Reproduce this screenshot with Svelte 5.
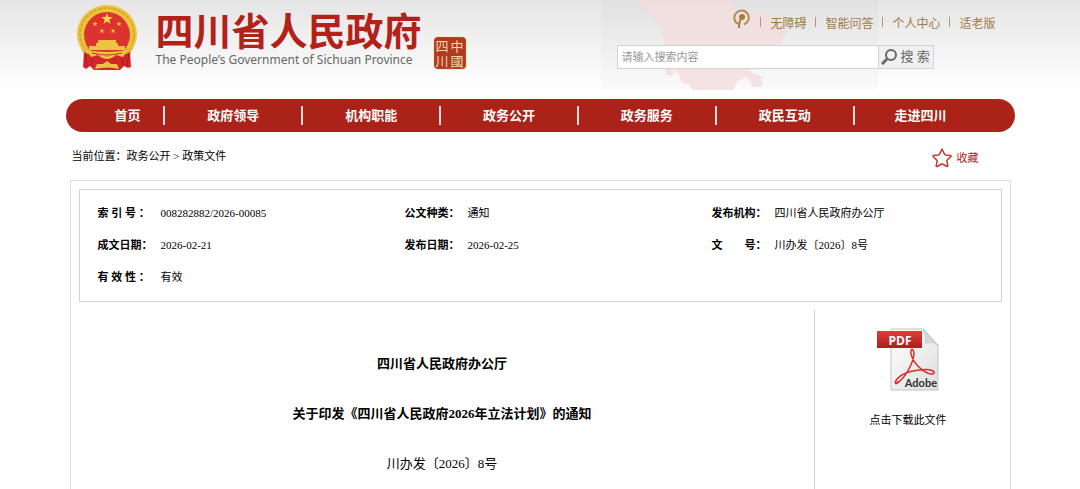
<script>
  let keyword = $state('');
  let saved = $state(false);

  const topLinks = ['无障碍', '智能问答', '个人中心', '适老版'];
  const navItems = ['首页', '政府领导', '机构职能', '政务公开', '政务服务', '政民互动', '走进四川'];

  const rows = [
    [
      { label: '索 引 号 ：', value: '008282882/2026-00085' },
      { label: '公文种类：', value: '通知' },
      { label: '发布机构：', value: '四川省人民政府办公厅' },
    ],
    [
      { label: '成文日期：', value: '2026-02-21' },
      { label: '发布日期：', value: '2026-02-25' },
      { label: '文　　号：', value: '川办发〔2026〕8号' },
    ],
    [{ label: '有 效 性 ：', value: '有效' }],
  ];

  const star = 'M0 -6L1.400 -1.900H5.700L2.300 .7L3.500 4.900L0 2.300L-3.500 4.900L-2.300 .7L-5.700 -1.900H-1.400Z';
  const smallStars = [[19, 20], [43, 20], [26, 27], [37, 27]];
</script>

<header>
  <div class="wrap header-inner">
    <svg class="map" viewBox="0 0 277 90" width="277" height="90" aria-hidden="true">
      <rect width="277" height="90" fill="#000" opacity="0.015" />
      <path
        fill="#f4dddd"
        opacity="0.8"
        d="M36 0L40 8L48 12L53 21L60 27L61 36L64 44L63 60L65 75L71 76L73 70L78 74L80 82L88 85L92 90H132L136 82L144 77L149 80L151 87L160 87L163 82L158 80L164 77L154 74L147 70L160 69L158 60L164 54L166 46L180 43L184 34L188 30L180 24L174 19L175 13L160 14L145 11L134 10L131 0Z"
      />
    </svg>

    <a class="brand" href="#home">
      <svg class="emblem" viewBox="0 0 62 68" width="62" height="68" aria-hidden="true">
        <ellipse cx="31" cy="30" rx="30" ry="29" fill="#edc440" />
        <ellipse cx="31" cy="30" rx="27" ry="26" fill="none" stroke="#dca92f" stroke-width="2" stroke-dasharray="4 1" />
        <path d="M5 44L12 58H50L57 44Z" fill="#e6b737" />
        <path d="M8 48L12 50L50 50L54 48L55 63L52 64L48 62L44 66H18L14 62L10 65L7 63Z" fill="#d2262c" />
        <ellipse cx="31" cy="31" rx="23" ry="23" fill="#dd332f" />
        <path transform="translate(31 15)" d={star} fill="#f8d64a" />
        {#each smallStars as [x, y]}
          <path transform="translate({x} {y}) scale(0.45)" d={star} fill="#f5cd45" />
        {/each}
        <path d="M22 36H40V39H42V42H49V46H13V42H20V39H22Z" fill="#edc440" />
        <path d="M10 46Q31 50 52 46L47 53L40 51Q31 59 22 51L15 53Z" fill="#edc440" />
        <path d="M16 49Q31 53 46 49" fill="none" stroke="#d2262c" stroke-width="1" />
        <path d="M25 50Q31 54 37 50" fill="none" stroke="#c4912a" stroke-width="1" />
        <path d="M19 65L21 60H27L31 57L35 60H41L43 65Q31 62 19 65Z" fill="#edc440" />
        <path d="M9 50L11 62M16 55L15 61M53 50L51 62M46 55L47 61" stroke="#a91820" stroke-width="1" />
      </svg>
      <span class="names">
        <span class="name">四川省人民政府</span>
        <span class="name-en">The People’s Government of Sichuan Province</span>
      </span>
      <span class="seal"><span>四</span><span>中</span><span>川</span><span>國</span></span>
    </a>

    <div class="tools">
      <div class="top-links">
        <a class="care" href="#care" aria-label="关怀">
          <svg viewBox="0 0 18 20" width="18" height="20">
            <path d="M5 15A7.200 7.200 0 1 1 11 15.500" fill="none" stroke="#b18a55" stroke-width="2" />
            <circle cx="9" cy="8" r="3" fill="#a9793c" />
            <path d="M9 8Q6 12 6 19" fill="none" stroke="#a9793c" stroke-width="2" />
          </svg>
        </a>
        {#each topLinks as link}
          <i></i>
          <a href="#top">{link}</a>
        {/each}
      </div>
      <form class="search" onsubmit={(e) => e.preventDefault()}>
        <input type="text" aria-label="搜索" placeholder="请输入搜索内容" bind:value={keyword} />
        <button type="submit">
          <svg viewBox="0 0 16 16" width="16" height="16" aria-hidden="true">
            <circle cx="10" cy="6" r="5" fill="none" stroke="#666" stroke-width="2" />
            <path d="M6 10L1 15" stroke="#666" stroke-width="3" />
          </svg>
          搜 索
        </button>
      </form>
    </div>
  </div>
</header>

<nav class="wrap">
  {#each navItems as item}
    <a href="#nav">{item}</a>
  {/each}
</nav>

<div class="content">
  <div class="crumbs">
    <div>当前位置：<a href="#open">政务公开</a> &gt; <a href="#policy">政策文件</a></div>
    <button class="fav" aria-pressed={saved} onclick={() => (saved = !saved)}>
      <svg viewBox="0 0 20 20" width="20" height="20" aria-hidden="true">
        <path
          d="M10 1L12.600 6.300Q13 6.800 13.600 6.900L18.500 7.500Q19.500 8 18.700 8.800L15 12.200Q14.700 12.600 14.900 13.200L15.900 17.800Q15.800 18.800 14.900 18.500L10.500 16Q10 15.800 9.500 16L5.100 18.500Q4.200 18.800 4.100 17.800L5.100 13.200Q5.300 12.600 5 12.200L1.300 8.800Q.5 8 1.500 7.500L6.400 6.900Q7 6.800 7.400 6.300Z"
          fill={saved ? '#c0392f' : 'none'}
          stroke="#c0392f"
          stroke-width="1.500"
          stroke-linejoin="round"
        />
      </svg>
      收藏
    </button>
  </div>

  <main>
    <div class="info">
      <table>
        <tbody>
          {#each rows as row}
            <tr>
              {#each row as cell}
                <th scope="row">{cell.label}</th>
                <td>{cell.value}</td>
              {/each}
            </tr>
          {/each}
        </tbody>
      </table>
    </div>

    <div class="doc">
      <article>
        <h1>四川省人民政府办公厅</h1>
        <h2>关于印发《四川省人民政府2026年立法计划》的通知</h2>
        <p>川办发〔2026〕8号</p>
      </article>
      <aside>
        <a href="#download">
          <svg viewBox="0 0 64 64" width="64" height="64" aria-hidden="true">
            <defs>
              <linearGradient id="page" x1="0" y1="0" x2="1" y2="1">
                <stop offset="0" stop-color="#fff" />
                <stop offset="1" stop-color="#dedede" />
              </linearGradient>
              <linearGradient id="band" x1="0" y1="0" x2="0" y2="1">
                <stop offset="0" stop-color="#e23c37" />
                <stop offset="1" stop-color="#a8201e" />
              </linearGradient>
            </defs>
            <path d="M15 1H47L62 17V62H15Z" fill="url(#page)" stroke="#c4c4c4" />
            <path d="M47 1Q51 8 49 15Q56 13 62 17Z" fill="#d6d6d6" stroke="#b5b5b5" stroke-width="0.500" />
            <path d="M20 55C28 53 38 34 38 25C37 18 33 22 36 29C39 37 50 47 57 46C61 44 55 40 43 42C34 43 26 45 21 51C18 55 19 58 24 53" fill="none" stroke="#dc2d28" stroke-width="1.500" />
            <rect x="1" y="3" width="45" height="17" fill="url(#band)" />
            <text x="24" y="17" text-anchor="middle" class="pdf">PDF</text>
            <text x="61" y="59" text-anchor="end" class="adobe">Adobe</text>
          </svg>
          <span>点击下载此文件</span>
        </a>
      </aside>
    </div>
  </main>
</div>

<style>
  :global(body) {
    background: #fff;
    color: #000;
    font-family: "Liberation Serif", "Noto Sans CJK SC", serif;
    font-size: 11px;
    line-height: 16px;
  }

  a {
    color: inherit;
    text-decoration: none;
  }

  svg { display: block; }

  button {
    font: inherit;
    cursor: pointer;
  }

  .wrap {
    max-width: 949px;
    margin: 0 auto;
  }

  header { background: linear-gradient(#e5e5e5, #fff 90px); }

  .header-inner {
    position: relative;
    display: flex;
    justify-content: space-between;
    height: 99px;
  }

  .map {
    position: absolute;
    top: 0;
    right: 137px;
  }

  .brand {
    display: flex;
    align-items: flex-start;
    padding: 4px 0 0 10px;
  }

  .names {
    display: flex;
    flex-direction: column;
    margin: 4px 0 0 18px;
  }

  .name {
    color: #b32219;
    font-family: "Noto Sans CJK SC", sans-serif;
    font-size: 38px;
    font-weight: bold;
    line-height: 42px;
  }

  .name-en {
    color: #666;
    font-family: "Noto Sans", sans-serif;
    font-size: 12px;
    line-height: 20px;
  }

  .seal {
    display: grid;
    grid-template-columns: 1fr 1fr;
    width: 32px;
    height: 32px;
    margin: 33px 0 0 12px;
    box-sizing: border-box;
    border: 1px solid #b5462c;
    border-radius: 3px;
    outline: 1px solid #f4edc4;
    background: #b03a24;
    color: #f3d9a4;
    font-family: "Noto Sans CJK SC", sans-serif;
    font-size: 13px;
    line-height: 15px;
    text-align: center;
  }

  .tools {
    position: relative;
    padding: 9px 19px 0 0;
  }

  .top-links {
    display: flex;
    align-items: center;
    justify-content: flex-end;
    gap: 9px;
    height: 30px;
    color: #a07a48;
    font-size: 12px;
  }

  .top-links i {
    width: 1px;
    height: 10px;
    margin-bottom: 4px;
    background: #b99668;
  }

  .top-links .care { margin-bottom: 10px; }

  .search {
    display: flex;
    width: 317px;
    height: 24px;
    margin: 6px 62px 0 0;
    box-sizing: border-box;
    border: 1px solid #d3d3d3;
  }

  .search input {
    flex: 1;
    min-width: 0;
    padding: 0 4px;
    border: 0;
    background: #fff;
    font-family: "Liberation Sans", "Noto Sans CJK SC", sans-serif;
    font-size: 11px;
  }

  .search input::placeholder { color: #999; }

  .search button {
    display: flex;
    align-items: center;
    gap: 4px;
    width: 55px;
    padding: 0 2px;
    border: 0;
    border-left: 1px solid #d3d3d3;
    background: #f0f0f0;
    color: #666;
    font-size: 13px;
    white-space: nowrap;
  }

  nav {
    display: grid;
    grid-template-columns: 72fr repeat(5, 138fr) 134fr;
    align-items: center;
    box-sizing: border-box;
    height: 33px;
    padding: 0 28px 0 26px;
    border-radius: 17px;
    background: #ab2218;
    color: #fff;
    font-size: 13px;
    font-weight: bold;
    line-height: 19px;
    text-align: center;
  }

  nav a + a { border-left: 2px solid #f0dcda; }

  .content {
    max-width: 941px;
    margin: 0 auto;
  }

  .crumbs {
    display: flex;
    justify-content: space-between;
    height: 32px;
    padding: 16px 32px 0 2px;
  }

  .fav {
    display: flex;
    align-items: center;
    gap: 5px;
    height: 20px;
    padding: 0;
    border: 0;
    background: none;
    color: #b32219;
  }

  main {
    padding: 8px 8px 0;
    border: 1px solid #ddd;
    border-bottom: 0;
  }

  .info {
    padding: 7px 0 8px;
    border: 1px solid #d3d3d3;
  }

  table {
    width: 100%;
    border-collapse: collapse;
    table-layout: fixed;
  }

  tr { height: 32px; }

  th {
    width: 63px;
    padding: 0 0 0 18px;
    text-align: left;
    white-space: nowrap;
  }

  td { padding: 0; }

  .doc {
    display: flex;
    min-height: 180px;
    margin-top: 7px;
  }

  article {
    flex: 1;
    padding: 42px 8px 0 0;
    font-size: 13px;
    line-height: 26px;
    text-align: center;
  }

  h1, h2, article p {
    margin: 0 0 24px;
    font-size: 13px;
  }

  aside {
    width: 187px;
    border-left: 1px solid #d3d3d3;
  }

  aside a {
    display: flex;
    flex-direction: column;
    align-items: center;
    gap: 20px;
    padding-top: 19px;
  }

  .pdf, .adobe {
    font-family: "Open Sans", sans-serif;
    font-weight: bold;
  }

  .pdf {
    fill: #fff;
    font-size: 12px;
  }

  .adobe {
    fill: #333;
    font-family: Lato, sans-serif;
    font-size: 11px;
  }
</style>
